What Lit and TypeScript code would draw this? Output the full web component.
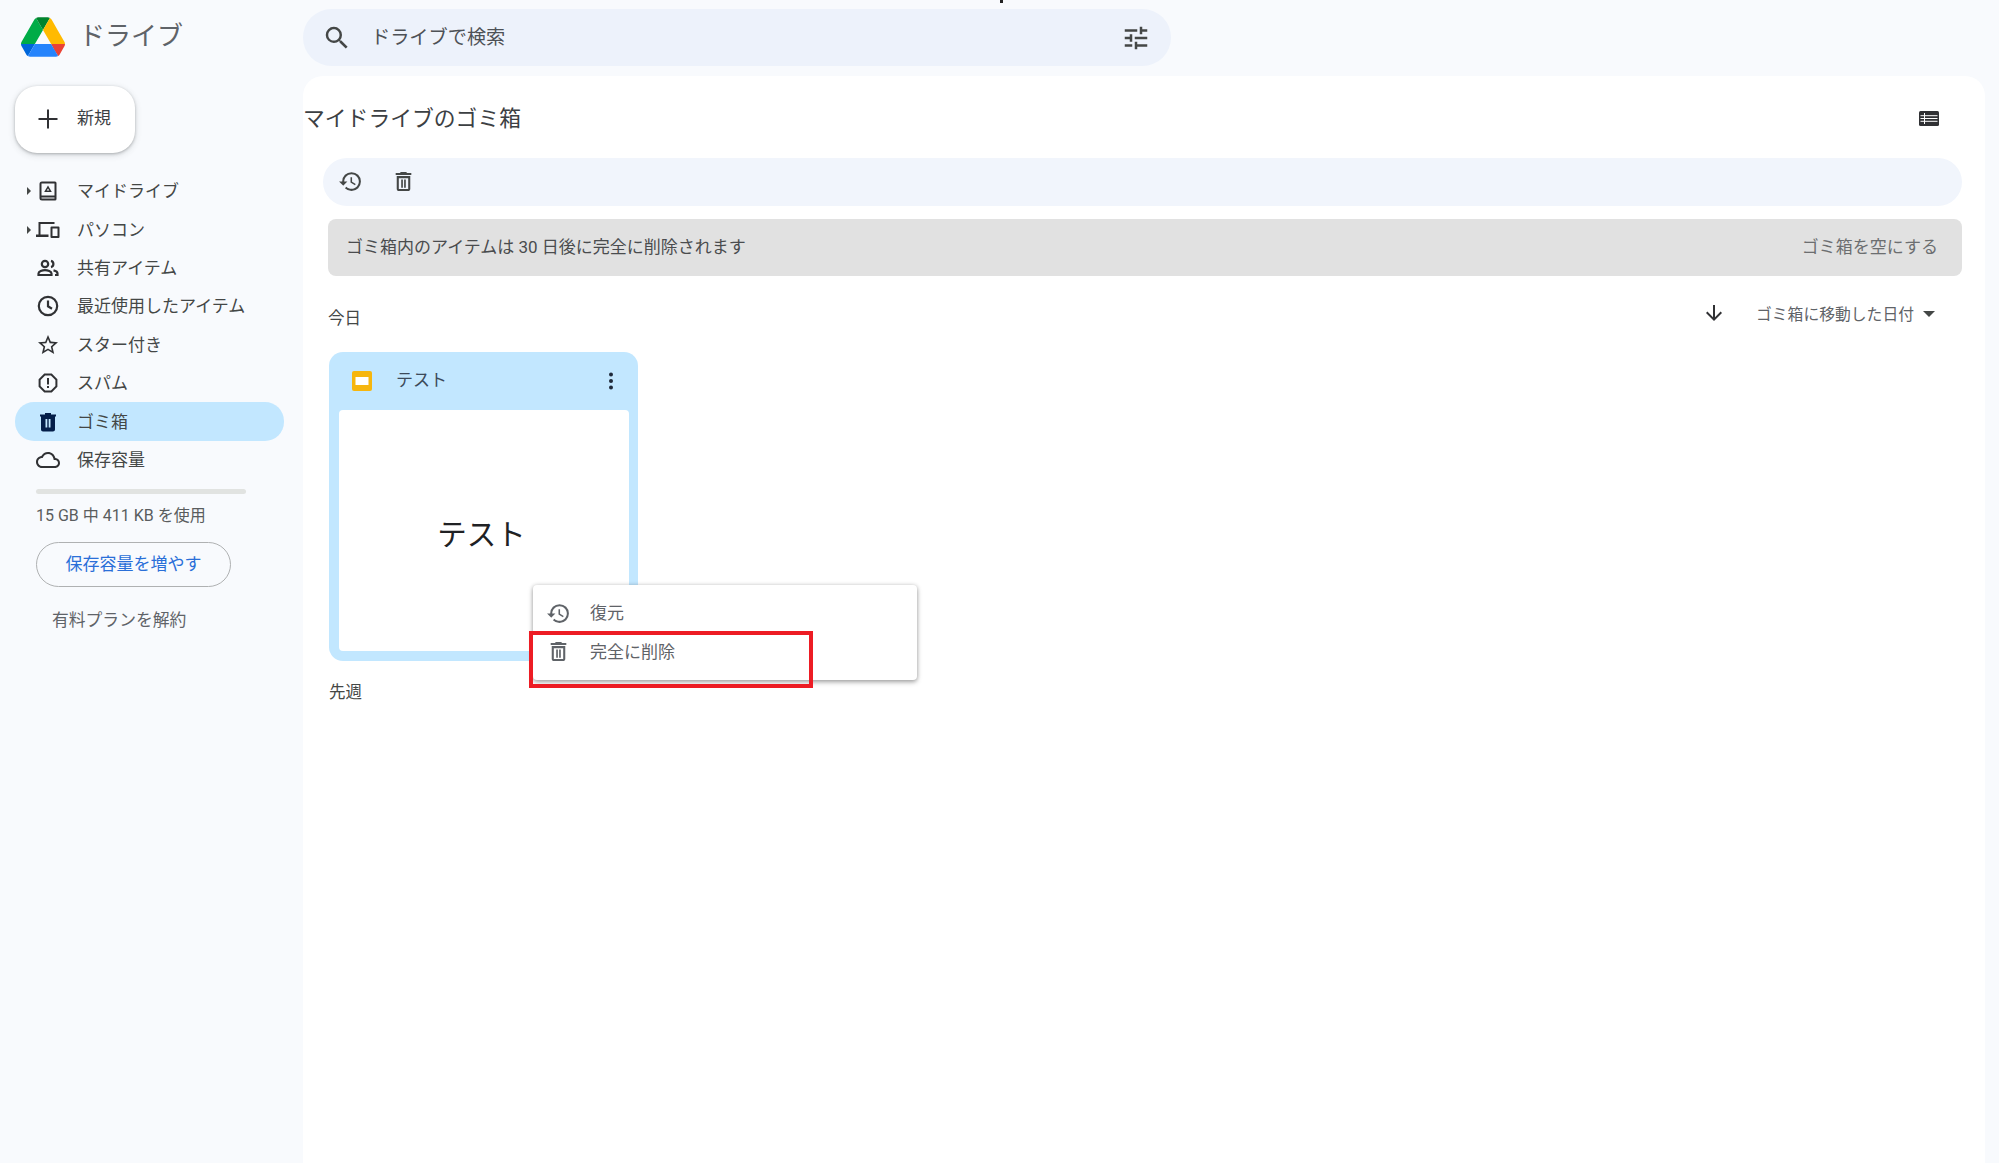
import { LitElement, html, css, svg } from "lit";
import { customElement } from "lit/decorators.js";

const ic = (body: unknown, cls = "ic") => html`<svg class=${cls} viewBox="0 0 24 24" aria-hidden="true">${body}</svg>`;

const restorePath = svg`<path d="M13 3a9 9 0 0 0-9 9H1l3.890 3.890.07.14L9 12H6c0-3.870 3.130-7 7-7s7 3.130 7 7-3.130 7-7 7c-1.930 0-3.680-.79-4.940-2.060l-1.420 1.420A8.954 8.954 0 0 0 13 21a9 9 0 0 0 0-18zm-1 5v5l4.280 2.540.72-1.210-3.500-2.080V8H12z"/>`;
const trashOutline = svg`<path d="M16.500 8.800v10.400h-9V8.800h9m-2-6h-5l-1 1H4.500v2h15v-2h-4l-1-1zM18.500 6.800h-13v12.400c0 1.100.9 2 2 2h9c1.100 0 2-.9 2-2V6.800z"/><path d="M9.800 10h1.600v8H9.800zM12.600 10h1.600v8h-1.600z"/>`;

const navItems = [
  { label: "マイドライブ", caret: true, icon: svg`<path fill-rule="evenodd" d="M6 2.500h13a1.500 1.500 0 0 1 1.500 1.500v16a1.500 1.500 0 0 1-1.500 1.500H6A2.500 2.500 0 0 1 3.500 19V5A2.500 2.500 0 0 1 6 2.500zM5.500 4.500v12h13v-12zM5.500 18.500v.5a.5.5 0 0 0 .5.5h12.500v-1z"/><path d="M12 6.500l3.800 6.500H8.200z"/><path fill="#f8fafd" d="M12 9.500l1.300 2.100h-2.600z"/>` },
  { label: "パソコン", caret: true, icon: svg`<path d="M2.500 4h16v2H4.500v10.500h8V19H0v-2.500h2.500z"/><path fill-rule="evenodd" d="M15.500 8.500h7a1 1 0 0 1 1 1V19a1 1 0 0 1-1 1h-7a1 1 0 0 1-1-1V9.500a1 1 0 0 1 1-1zM16.500 10.500v7.500h5v-7.500z"/>` },
  { label: "共有アイテム", icon: svg`<g fill="none" stroke="currentColor" stroke-width="2.200"><circle cx="9" cy="8" r="3.200"/><path d="M2.500 19v-1.500c0-2 3.800-3.300 6.500-3.300s6.500 1.300 6.500 3.300V19z"/><path d="M15 4.900a3.200 3.200 0 0 1 0 6.200"/><path d="M17.500 14.400c2.300.5 4 1.500 4 3.100V19H19"/></g>` },
  { label: "最近使用したアイテム", icon: svg`<g fill="none" stroke="currentColor" stroke-width="2.200"><circle cx="12" cy="12" r="9.200"/><path d="M12 6.500v5.800l4 2.400"/></g>` },
  { label: "スター付き", icon: svg`<path d="M22 9.240l-7.190-.62L12 2 9.190 8.630 2 9.240l5.460 4.730L5.820 21 12 17.270 18.180 21l-1.630-7.030L22 9.240zM12 15.400l-3.760 2.270 1-4.280-3.320-2.880 4.380-.38L12 6.100l1.710 4.040 4.380.38-3.320 2.880 1 4.280L12 15.400z"/>` },
  { label: "スパム", icon: svg`<path d="M15.730 2.600H8.270L2.600 8.270v7.460L8.270 21.400h7.460l5.670-5.670V8.270L15.730 2.600zM19.400 14.900l-4.500 4.500H9.100l-4.500-4.500V9.100l4.500-4.500h5.800l4.500 4.500v5.800z"/><path d="M11 7h2v6.500h-2zM11 15h2v2h-2z"/>` },
  { label: "ゴミ箱", active: true, icon: svg`<path fill-rule="evenodd" d="M15 3H9v1.500H4v2h1V19.500c0 1.100.9 2 2 2h10c1.100 0 2-.9 2-2V6.500h1v-2h-5zM9.500 9h1.800v8.500H9.500zM12.700 9h1.800v8.500h-1.800z"/>` },
  { label: "保存容量", icon: svg`<path d="M19.350 10.040C18.670 6.590 15.640 4 12 4 9.110 4 6.600 5.640 5.350 8.040 2.340 8.360 0 10.910 0 14c0 3.310 2.690 6 6 6h13c2.760 0 5-2.240 5-5 0-2.640-2.050-4.780-4.650-4.960zM19 18H6c-2.210 0-4-1.790-4-4 0-2.050 1.530-3.760 3.560-3.970l1.070-.11.5-.95C8.080 7.140 9.940 6 12 6c2.620 0 4.880 1.860 5.390 4.430l.3 1.500 1.530.11c1.560.1 2.780 1.410 2.780 2.960 0 1.650-1.350 3-3 3z"/>` },
];

@customElement("app-root")
export class AppRoot extends LitElement {
  static styles = css`
    :host {
      display: grid;
      grid-template-columns: 303px 1fr;
      width: 1999px;
      height: 1163px;
      overflow: hidden;
      position: relative;
      background: #f8fafd;
      color: #444746;
      font-family: Roboto, "Noto Sans CJK JP", sans-serif;
      font-size: 17px;
    }
    .ic { width: 24px; height: 24px; fill: currentColor; flex: none; display: block; }
    .ic-lg { width: 30px; height: 30px; fill: currentColor; flex: none; display: block; }
    .ic-22 { width: 25px; height: 25px; fill: #444746; flex: none; display: block; }
    .topdot { position: absolute; left: 1000px; top: 0; width: 3px; height: 3px; background: #222; }

    .side { display: flex; flex-direction: column; }
    .brand { height: 76px; display: flex; align-items: center; gap: 14px; padding: 0 0 3px 21px; box-sizing: border-box; }
    .logo { width: 44px; height: 40px; display: block; }
    .brand-name { font-size: 26px; color: #5f6368; line-height: 36px; position: relative; top: -1px; }
    .new {
      margin: 10px 0 0 15px; width: 120px; height: 67px; box-sizing: border-box;
      background: #fff; border-radius: 22px; padding-left: 21px;
      display: flex; align-items: center; gap: 17px;
      box-shadow: 0 1px 3px rgba(60,64,67,.35), 0 2px 6px 1px rgba(60,64,67,.12);
      color: #3c4043;
    }
    .new span { position: relative; bottom: 3px; }
    .plus { width: 24px; height: 24px; fill: #303134; flex: none; position: relative; bottom: 1px; }
    .nav { margin-top: 19px; display: flex; flex-direction: column; }
    .row {
      margin-left: 15px; width: 269px; height: 38.400px; box-sizing: border-box;
      display: flex; align-items: center; padding-left: 8px; border-radius: 19px; color: #444746;
    }
    .row.active { background: #c2e7ff; }
    .row.active .ic { color: #041e49; }
    .row .ic { color: #303134; }
    .caret-slot { width: 13px; flex: none; display: flex; align-items: center; padding-left: 4px; box-sizing: border-box; }
    .caret-r { width: 0; height: 0; border-left: 4px solid #444746; border-top: 4px solid transparent; border-bottom: 4px solid transparent; }
    .row .label { margin-left: 17px; line-height: 24px; }
    .bar { margin: 10px 0 0 36px; width: 210px; height: 5px; border-radius: 3px; background: #e1e3e1; }
    .used { margin: 12px 0 0 36px; font-size: 16px; line-height: 20px; color: #5a5d5e; }
    .more {
      margin: 16px 0 0 36px; width: 195px; height: 45px; box-sizing: border-box;
      border: 1.500px solid #afb1b2; border-radius: 23px; color: #2a6fd8;
      display: flex; align-items: center; justify-content: center; padding-bottom: 4px;
    }
    .cancel { margin: 22px 0 0 52px; font-size: 16.800px; line-height: 22px; color: #5f6368; }

    .main { display: flex; flex-direction: column; min-width: 0; }
    .search {
      margin-top: 9px; width: 868px; height: 57px; box-sizing: border-box; background: #edf2fb;
      border-radius: 29px; display: flex; align-items: center; padding: 0 20px 0 19px; gap: 19px; color: #444746;
    }
    .search .q { flex: 1; font-size: 19.200px; color: #4d5156; position: relative; top: -2px; }
    .panel {
      margin: 10px 14px 0 0; flex: 1; background: #fff; border-radius: 20px 20px 0 0;
      position: relative; display: flex; flex-direction: column;
    }
    .title-row { height: 82px; display: flex; align-items: center; justify-content: space-between; padding: 2px 46px 0 0; box-sizing: border-box; }
    .title { font-size: 21.800px; color: #3c4043; line-height: 30px; position: relative; top: 1px; }
    .viewicon { width: 20px; height: 15px; display: block; }
    .toolbar {
      margin: 0 23px 0 20px; height: 48px; background: #f1f5fc; border-radius: 24px;
      display: flex; align-items: center; padding: 0 0 2px 15px; gap: 28px; box-sizing: border-box;
    }
    .banner {
      margin: 13px 23px 0 25px; height: 57px; background: #e1e1e1; border-radius: 8px;
      display: flex; align-items: center; justify-content: space-between; padding: 0 24px 5px 18px; box-sizing: border-box;
      color: #4a4c4e;
    }
    .banner .empty { color: #6c6e70; }
    .day-row {
      height: 76px; margin: 0 23px 0 25px; display: flex; align-items: center; justify-content: space-between;
      box-sizing: border-box; padding-right: 27px;
    }
    .day { font-size: 16.500px; line-height: 24px; color: #444746; position: relative; top: 5px; }
    .sort { display: flex; align-items: center; font-size: 15.800px; color: #5f6368; position: relative; top: -1px; }
    .sort .arrow { width: 24px; height: 24px; fill: #303134; margin-right: 30px; }
    .sort .caret-d { margin-left: 9px; width: 0; height: 0; border-top: 6px solid #444746; border-left: 6px solid transparent; border-right: 6px solid transparent; position: relative; top: 1px; }
    .card {
      margin-left: 26px; width: 309px; height: 309px; box-sizing: border-box; background: #c2e7ff; border-radius: 14px;
      padding: 0 9px 10px 10px; display: flex; flex-direction: column;
    }
    .card-head { height: 58px; flex: none; display: flex; align-items: center; padding: 0 6px 0 13px; }
    .slide { width: 20px; height: 20px; flex: none; display: block; }
    .card-name { margin-left: 24px; flex: 1; color: #3c4a5a; line-height: 24px; position: relative; top: -1px; }
    .dots { width: 24px; height: 24px; fill: #1f2a3a; flex: none; }
    .thumb {
      flex: 1; background: #fff; border-radius: 4px; display: flex; align-items: center; justify-content: center;
      font-size: 29.500px; color: #202124; padding: 2px 5px 0 0;
    }
    .week { margin: 20px 0 0 26px; font-size: 16.500px; line-height: 24px; color: #444746; }

    .menu {
      position: absolute; left: 230px; top: 509px; width: 384px; height: 95px; background: #fff; border-radius: 4px;
      box-shadow: 0 2px 5px rgba(0,0,0,.35), 0 0 4px rgba(0,0,0,.12);
      display: flex; flex-direction: column; padding-top: 9px; box-sizing: border-box; color: #5f6368;
    }
    .mi { height: 38.400px; display: flex; align-items: center; padding-left: 13px; flex: none; }
    .mi .ic-22 { fill: #5f6368; }
    .mi span { margin-left: 19px; line-height: 24px; }
    .mark {
      position: absolute; left: 226px; top: 555px; width: 284px; height: 57px; box-sizing: border-box;
      border: 4.500px solid #ed1c24;
    }
  `;

  render() {
    return html`
      <div class="topdot"></div>
      <aside class="side">
        <div class="brand">
          <svg class="logo" viewBox="0 0 87.300 78" aria-hidden="true">
            <path d="m6.600 66.850 3.850 6.650c.8 1.400 1.950 2.500 3.300 3.300l13.750-23.800h-27.500c0 1.550.4 3.100 1.200 4.500z" fill="#0066da"/>
            <path d="m43.650 25-13.750-23.800c-1.350.8-2.500 1.900-3.300 3.300l-25.400 44a9.060 9.060 0 0 0 -1.200 4.500h27.500z" fill="#00ac47"/>
            <path d="m73.550 76.800c1.350-.8 2.500-1.900 3.300-3.300l1.600-2.750 7.650-13.250c.8-1.400 1.200-2.950 1.200-4.500h-27.502l5.852 11.500z" fill="#ea4335"/>
            <path d="m43.650 25 13.750-23.800c-1.350-.8-2.900-1.200-4.500-1.200h-18.500c-1.600 0-3.150.45-4.500 1.200z" fill="#00832d"/>
            <path d="m59.800 53h-32.300l-13.750 23.800c1.350.8 2.900 1.200 4.500 1.200h50.800c1.600 0 3.150-.45 4.500-1.200z" fill="#2684fc"/>
            <path d="m73.400 26.500-12.700-22c-.8-1.400-1.950-2.500-3.300-3.300l-13.750 23.800 16.150 28h27.450c0-1.550-.4-3.100-1.200-4.500z" fill="#ffba00"/>
          </svg>
          <div class="brand-name">ドライブ</div>
        </div>
        <div class="new">
          <svg class="plus" viewBox="0 0 24 24" aria-hidden="true"><path d="M11 2.500h2V11h8.500v2H13v8.500h-2V13H2.500v-2H11z"/></svg>
          <span>新規</span>
        </div>
        <nav class="nav">
          ${navItems.map(
            (n) => html`<div class="row ${n.active ? "active" : ""}">
              <div class="caret-slot">${n.caret ? html`<div class="caret-r"></div>` : ""}</div>
              ${ic(n.icon)}
              <div class="label">${n.label}</div>
            </div>`
          )}
        </nav>
        <div class="bar"></div>
        <div class="used">15 GB 中 411 KB を使用</div>
        <div class="more">保存容量を増やす</div>
        <div class="cancel">有料プランを解約</div>
      </aside>
      <main class="main">
        <div class="search">
          ${ic(svg`<path d="M15.500 14h-.79l-.28-.27A6.471 6.471 0 0 0 16 9.500 6.500 6.500 0 1 0 9.500 16c1.610 0 3.090-.59 4.230-1.570l.27.28v.79l5 4.990L20.490 19l-4.990-5zm-6 0C7.010 14 5 11.990 5 9.500S7.010 5 9.500 5 14 7.010 14 9.500 11.990 14 9.500 14z"/>`, "ic-lg")}
          <div class="q">ドライブで検索</div>
          ${ic(svg`<path d="M3 17v2h6v-2H3zM3 5v2h10V5H3zm10 16v-2h8v-2h-8v-2h-2v6h2zM7 9v2H3v2h4v2h2V9H7zm14 4v-2H11v2h10zm-6-4h2V7h4V5h-4V3h-2v6z"/>`, "ic-lg")}
        </div>
        <section class="panel">
          <div class="title-row">
            <div class="title">マイドライブのゴミ箱</div>
            <svg class="viewicon" viewBox="0 0 20 15" aria-hidden="true">
              <rect width="20" height="15" rx="1.500" fill="#303134"/>
              <path d="M1.500 4.700h17M1.500 7.500h17M1.500 10.300h17M5.500 2v11" stroke="#fff" stroke-width="1" fill="none"/>
            </svg>
          </div>
          <div class="toolbar">
            ${ic(restorePath, "ic-22")}
            ${ic(trashOutline, "ic-22")}
          </div>
          <div class="banner">
            <span>ゴミ箱内のアイテムは 30 日後に完全に削除されます</span>
            <span class="empty">ゴミ箱を空にする</span>
          </div>
          <div class="day-row">
            <div class="day">今日</div>
            <div class="sort">
              <svg class="arrow" viewBox="0 0 24 24" aria-hidden="true"><path d="M20 12l-1.410-1.410L13 16.170V4h-2v12.170l-5.580-5.590L4 12l8 8 8-8z"/></svg>
              <span>ゴミ箱に移動した日付</span>
              <div class="caret-d"></div>
            </div>
          </div>
          <div class="card">
            <div class="card-head">
              <svg class="slide" viewBox="0 0 20 20" aria-hidden="true">
                <rect width="20" height="20" rx="2" fill="#f6b60e"/>
                <rect x="3.500" y="6" width="13" height="8" fill="#fff"/>
              </svg>
              <div class="card-name">テスト</div>
              <svg class="dots" viewBox="0 0 24 24" aria-hidden="true"><circle cx="12" cy="5.500" r="2"/><circle cx="12" cy="12" r="2"/><circle cx="12" cy="18.500" r="2"/></svg>
            </div>
            <div class="thumb">テスト</div>
          </div>
          <div class="week">先週</div>
          <div class="menu">
            <div class="mi">${ic(restorePath, "ic-22")}<span>復元</span></div>
            <div class="mi">${ic(trashOutline, "ic-22")}<span>完全に削除</span></div>
          </div>
          <div class="mark"></div>
        </section>
      </main>
    `;
  }
}
